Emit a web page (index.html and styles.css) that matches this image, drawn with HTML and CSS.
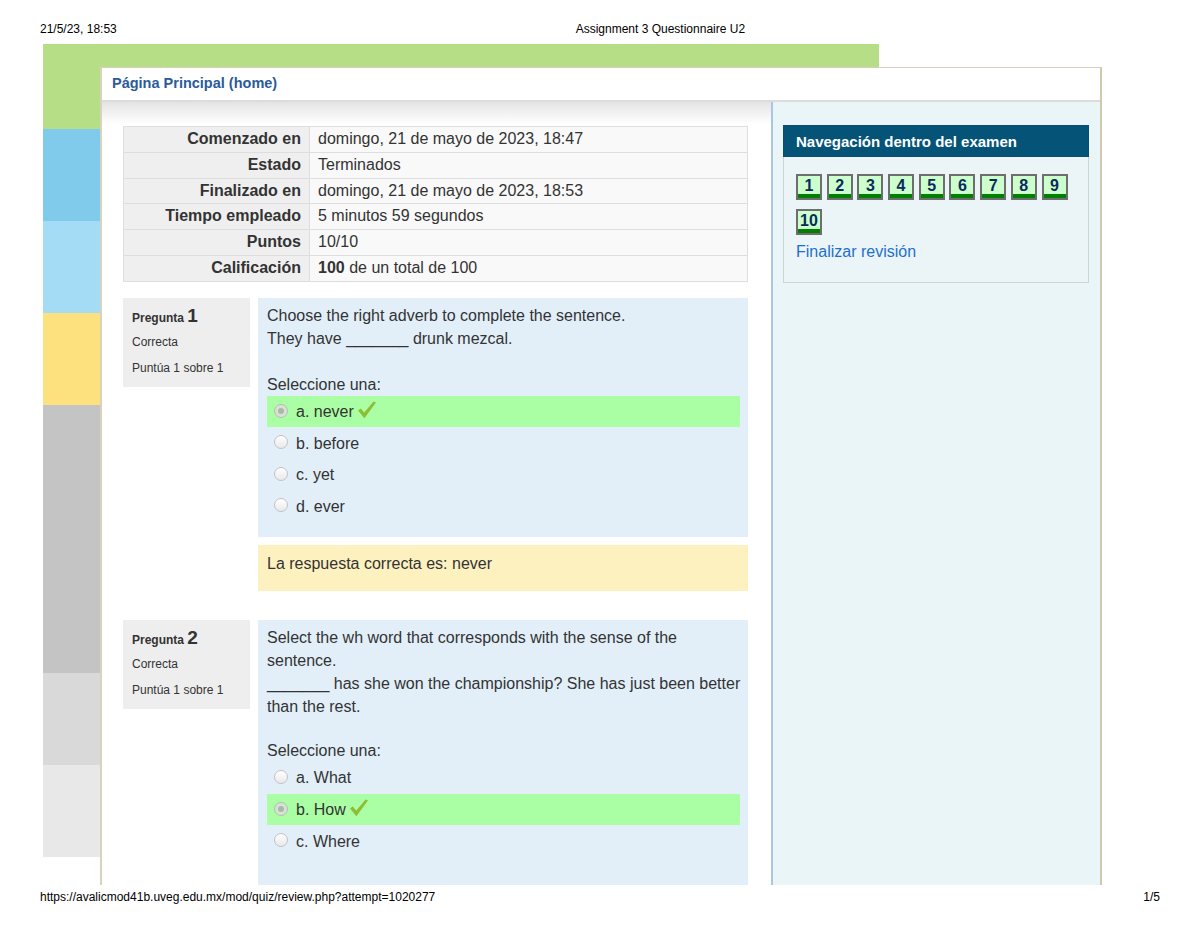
FILE: index.html
```html
<!DOCTYPE html>
<html lang="es">
<head>
<meta charset="utf-8">
<title>Assignment 3 Questionnaire U2</title>
<link rel="stylesheet" href="styles.css">
</head>
<body>
<div class="print-head">
  <span class="ph-date">21/5/23, 18:53</span>
  <span class="ph-title">Assignment 3 Questionnaire U2</span>
</div>

<div class="sheet">
  <div class="topbar"></div>
  <div class="sheet-row">
    <div class="strip">
      <div class="blk blk-green"></div>
      <div class="blk blk-blue"></div>
      <div class="blk blk-lblue"></div>
      <div class="blk blk-yellow"></div>
      <div class="blk blk-gray"></div>
      <div class="blk blk-lgray"></div>
      <div class="blk blk-xlgray"></div>
    </div>
    <div class="box">
      <div class="box-head"><a class="home-link" href="#">Página Principal (home)</a></div>
      <div class="box-body">
        <div class="main">
          <table class="summary">
            <tr><th>Comenzado en</th><td>domingo, 21 de mayo de 2023, 18:47</td></tr>
            <tr><th>Estado</th><td>Terminados</td></tr>
            <tr><th>Finalizado en</th><td>domingo, 21 de mayo de 2023, 18:53</td></tr>
            <tr><th>Tiempo empleado</th><td>5 minutos 59 segundos</td></tr>
            <tr><th>Puntos</th><td>10/10</td></tr>
            <tr><th>Calificación</th><td><b>100</b> de un total de 100</td></tr>
          </table>

          <div class="que">
            <div class="info">
              <div class="qno">Pregunta <span class="num">1</span></div>
              <div class="state">Correcta</div>
              <div class="grade">Puntúa 1 sobre 1</div>
            </div>
            <div class="qcol">
              <div class="formulation">
                <div class="qtext">Choose the right adverb to complete the sentence.<br>They have _______ drunk mezcal.</div>
                <div class="prompt">Seleccione una:</div>
                <div class="answer">
                  <div class="opt correct"><span class="radio checked"></span><span>a. never</span><svg class="tick" width="18" height="18" viewBox="0 0 18 18"><polygon points="0,9.5 2.8,7.6 6.2,11.6 15.6,0.4 18,1.6 6.4,17.2" fill="#8cbf35"/></svg></div>
                  <div class="opt"><span class="radio"></span><span>b. before</span></div>
                  <div class="opt"><span class="radio"></span><span>c. yet</span></div>
                  <div class="opt"><span class="radio"></span><span>d. ever</span></div>
                </div>
              </div>
              <div class="feedback">La respuesta correcta es: never</div>
            </div>
          </div>

          <div class="que">
            <div class="info">
              <div class="qno">Pregunta <span class="num">2</span></div>
              <div class="state">Correcta</div>
              <div class="grade">Puntúa 1 sobre 1</div>
            </div>
            <div class="qcol">
              <div class="formulation tall">
                <div class="qtext">Select the wh word that corresponds with the sense of the sentence.<br>_______ has she won the championship? She has just been better than the rest.</div>
                <div class="prompt">Seleccione una:</div>
                <div class="answer">
                  <div class="opt"><span class="radio"></span><span>a. What</span></div>
                  <div class="opt correct"><span class="radio checked"></span><span>b. How</span><svg class="tick" width="18" height="18" viewBox="0 0 18 18"><polygon points="0,9.5 2.8,7.6 6.2,11.6 15.6,0.4 18,1.6 6.4,17.2" fill="#8cbf35"/></svg></div>
                  <div class="opt"><span class="radio"></span><span>c. Where</span></div>
                </div>
              </div>
            </div>
          </div>
        </div>

        <aside class="side">
          <div class="navblock">
            <div class="nav-head">Navegación dentro del examen</div>
            <div class="nav-body">
              <div class="qnbuttons">
                <a class="qnbutton" href="#">1</a>
                <a class="qnbutton" href="#">2</a>
                <a class="qnbutton" href="#">3</a>
                <a class="qnbutton" href="#">4</a>
                <a class="qnbutton" href="#">5</a>
                <a class="qnbutton" href="#">6</a>
                <a class="qnbutton" href="#">7</a>
                <a class="qnbutton" href="#">8</a>
                <a class="qnbutton" href="#">9</a>
                <a class="qnbutton" href="#">10</a>
              </div>
              <a class="finish" href="#">Finalizar revisión</a>
            </div>
          </div>
        </aside>
      </div>
    </div>
  </div>
</div>

<div class="print-foot">
  <span>https://avalicmod41b.uveg.edu.mx/mod/quiz/review.php?attempt=1020277</span>
  <span>1/5</span>
</div>
</body>
</html>
```

FILE: styles.css
```css
* { box-sizing: border-box; }

html, body {
  margin: 0;
  padding: 0;
  background: #fff;
  font-family: "Liberation Sans", Arial, sans-serif;
  color: #333;
}

body {
  width: 1200px;
  height: 927px;
  overflow: hidden;
}

/* print header / footer */
.print-head {
  display: flex;
  height: 44px;
  padding: 22px 0 0 40px;
  font-size: 12px;
  line-height: 14px;
  color: #000;
}
.ph-title {
  flex: 1;
  text-align: center;
  padding-left: 4px;
}

.print-foot {
  display: flex;
  justify-content: space-between;
  padding: 5px 40px 0 40px;
  font-size: 12px;
  line-height: 14px;
  color: #000;
}

/* sheet */
.sheet {
  margin-left: 43px;
  height: 841px;
  display: flex;
  flex-direction: column;
}
.topbar {
  width: 836px;
  height: 23px;
  background: #b5de86;
  flex: none;
}
.sheet-row {
  display: flex;
  height: 818px;
  overflow: hidden;
  flex: none;
}
.strip {
  width: 57px;
  flex: none;
  display: flex;
  flex-direction: column;
}
.blk { height: 92px; flex: none; }
.blk-green { height: 62px; background: #b5de86; }
.blk-blue { background: #80cbec; }
.blk-lblue { background: #a5dcf5; }
.blk-yellow { background: #fde17f; }
.blk-gray { height: 268px; background: #c4c4c4; }
.blk-lgray { background: #d9d9d9; }
.blk-xlgray { background: #e8e8e8; }

/* box */
.box {
  width: 1002px;
  flex: none;
  display: flex;
  flex-direction: column;
  border-top: 1px solid #d6d0b8;
  border-left: 2px solid #d9d3be;
  border-right: 2px solid #d0c9ae;
  background: #fff;
}
.box-head {
  flex: none;
  height: 34px;
  padding: 0 10px;
  border-bottom: 2px solid #dcdcdc;
  line-height: 30px;
}
.home-link {
  color: #2a5b9a;
  font-weight: bold;
  font-size: 14.5px;
  text-decoration: none;
}
.box-body {
  flex: 1 0 auto;
  display: flex;
}

/* main column */
.main {
  width: 669px;
  flex: none;
  padding: 24px 23px 0 21px;
  background: linear-gradient(#e4e4e4, #ffffff 22px);
}

.summary {
  width: 625px;
  border-collapse: collapse;
  font-size: 16px;
  line-height: 18.8px;
  border: 1px solid #dadada;
}
.summary th,
.summary td {
  border: 1px solid #dedede;
  padding: 3px 8px;
  vertical-align: middle;
}
.summary th {
  width: 186px;
  text-align: right;
  background: #efefef;
  font-weight: bold;
  color: #333;
}
.summary td {
  background: #f9f9f9;
  text-align: left;
}

.que {
  display: flex;
  align-items: flex-start;
  gap: 8px;
  margin-top: 16px;
}
.que + .que { margin-top: 29px; }

.info {
  width: 127px;
  flex: none;
  background: #eeeeee;
  padding: 7px 9px 6px 9px;
  font-size: 12px;
  color: #333;
}
.qno {
  font-weight: bold;
  line-height: 22px;
}
.qno .num {
  font-size: 19px;
}
.state,
.grade {
  line-height: 26px;
}

.qcol {
  width: 490px;
  flex: none;
}
.formulation {
  background: #e2eff9;
  padding: 6px 8px 15px 9px;
  font-size: 16px;
  line-height: 23px;
  color: #333;
}
.formulation.tall {
  padding-bottom: 60px;
}
.formulation.tall .prompt {
  margin-top: 21px;
}
.qtext {
  margin-right: -8px;
}
.prompt {
  margin-top: 23px;
}
.opt {
  display: flex;
  align-items: center;
  height: 31.6px;
  padding-left: 7px;
}
.opt.correct {
  background: #aaffa4;
}
.radio {
  width: 14px;
  height: 14px;
  border-radius: 50%;
  border: 1px solid #c2c2c2;
  background: linear-gradient(#ffffff, #e9e9e9);
  margin-right: 8px;
  flex: none;
  position: relative;
  top: -1px;
}
.radio.checked {
  border-color: #b4beb4;
  background: #d6e2d6;
}
.radio.checked::after {
  content: "";
  position: absolute;
  left: 3px;
  top: 3px;
  width: 6px;
  height: 6px;
  border-radius: 50%;
  background: #aab8aa;
}
.tick {
  margin-left: 4px;
  position: relative;
  top: -2px;
}

.feedback {
  margin-top: 8px;
  background: #fdf1c0;
  padding: 8px 9px 16px 9px;
  font-size: 16px;
  line-height: 22px;
  color: #333;
}

/* side column */
.side {
  flex: 1;
  background: #eaf5f8;
  border-left: 2px solid #a9c6e2;
  padding: 23px 11px 0 10px;
}
.navblock {
  width: 306px;
}
.nav-head {
  height: 32px;
  line-height: 32px;
  padding: 0 12px;
  background: #055478;
  color: #fff;
  font-weight: bold;
  font-size: 15px;
  border: 1px solid #0a4d6c;
}
.nav-body {
  border: 1px solid #cdd5d8;
  border-top: none;
  padding: 17px 12px 20px 12px;
  background: #ebf5f8;
}
.qnbuttons {
  display: flex;
  flex-wrap: wrap;
  gap: 9px 4.7px;
}
.qnbutton {
  width: 26px;
  height: 26px;
  border: 2px solid #6e6e6e;
  background: #ccffcc;
  box-shadow: inset 0 -4px 0 #008000;
  color: #0b2a5c;
  font-weight: bold;
  font-size: 16px;
  line-height: 19px;
  text-align: center;
  text-decoration: none;
}
.finish {
  display: block;
  margin-top: 7px;
  color: #1e70cf;
  font-size: 16px;
  line-height: 20px;
  text-decoration: none;
}
```
